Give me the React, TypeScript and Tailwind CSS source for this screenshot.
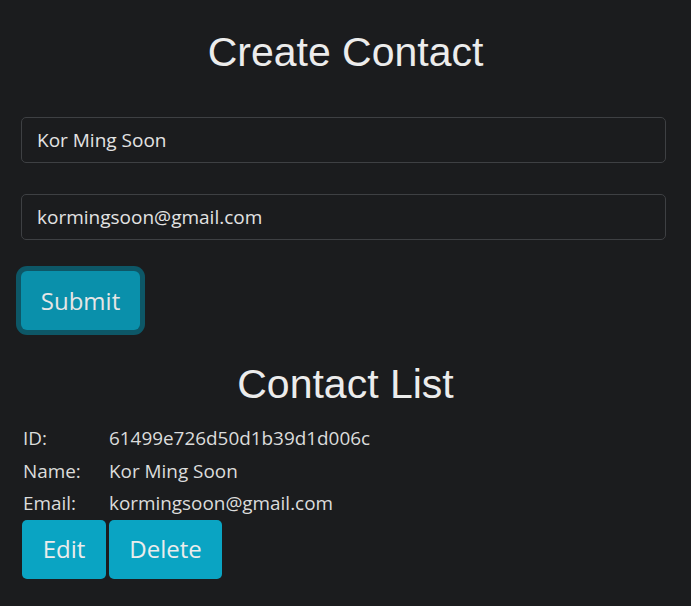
const contact = {
  id: '61499e726d50d1b39d1d006c',
  name: 'Kor Ming Soon',
  email: 'kormingsoon@gmail.com',
};

const bodyFont = "font-['Open_Sans','Noto_Sans',sans-serif]";
const headFont = "font-['Liberation_Sans',Arial,sans-serif]";

function ContactRow({ label, value }: { label: string; value: string }) {
  return (
    <div className="flex h-[32.5px] items-center pl-[2px] text-[18.9px] text-[#dcdcdc]">
      <span className="w-[86px]">{label}</span>
      <span>{value}</span>
    </div>
  );
}

export default function App() {
  return (
    <div className={`min-h-[606px] w-full bg-[#1b1c1e] ${bodyFont}`}>
      <div className="flex w-[670px] flex-col pl-[21px] pt-[28px]">
        <h1
          className={`${headFont} text-center text-[41px] leading-[48px] text-[#ececec]`}
        >
          Create Contact
        </h1>

        <form className="mt-[41px] flex flex-col">
          <input
            readOnly
            value={contact.name}
            className="h-[46px] w-[645px] rounded-[5px] border border-[#3e4043] bg-[#1b1c1e] px-[15px] text-[19px] text-[#e3e3e3] outline-none"
          />
          <input
            readOnly
            value={contact.email}
            className="mt-[31px] h-[46px] w-[645px] rounded-[5px] border border-[#3e4043] bg-[#1b1c1e] px-[15px] text-[19px] text-[#e3e3e3] outline-none"
          />
          <div className="mt-[31px]">
            <button
              type="button"
              className="h-[59px] w-[119px] rounded-[6px] bg-[#0a90ab] text-[24px] text-[#e6e6e6] ring-[5px] ring-[#0d5767]"
            >
              Submit
            </button>
          </div>
        </form>

        <h2
          className={`${headFont} mt-[30px] text-center text-[41px] leading-[48px] text-[#ececec]`}
        >
          Contact List
        </h2>

        <div className="mt-[14px] flex flex-col">
          <ContactRow label="ID:" value={contact.id} />
          <ContactRow label="Name:" value={contact.name} />
          <ContactRow label="Email:" value={contact.email} />
        </div>

        <div className="flex gap-[3px] pl-[1px]">
          <button
            type="button"
            className="h-[59px] w-[84px] rounded-[5px] bg-[#0aa4c3] text-[24px] text-[#ececec]"
          >
            Edit
          </button>
          <button
            type="button"
            className="h-[59px] w-[113px] rounded-[5px] bg-[#0aa4c3] text-[24px] text-[#ececec]"
          >
            Delete
          </button>
        </div>
      </div>
    </div>
  );
}
